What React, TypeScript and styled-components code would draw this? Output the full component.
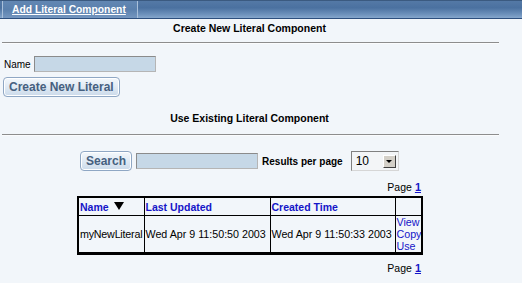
import React from "react";
import styled, { createGlobalStyle } from "styled-components";

const GlobalStyle = createGlobalStyle`
  html, body {
    margin: 0;
    padding: 0;
    background: #f2f6fa;
    font-family: "Liberation Sans", Arial, sans-serif;
  }
`;

const Page = styled.div`
  width: 522px;
  height: 283px;
  background: #f2f6fa;
  overflow: hidden;
`;

// 上部のタブバー
const TabBar = styled.div`
  height: 19px;
  display: flex;
  box-sizing: border-box;
  border-top: 1px solid #3b5a80;
  border-bottom: 1px solid #2d4f7e;
  background: linear-gradient(#5479a6, #4b71a0 40%, #6f93bd 80%, #86a7cc);
`;

const Tab = styled.a`
  width: 136px;
  margin-left: 2px;
  box-sizing: border-box;
  border-left: 1px solid #a9c0da;
  border-right: 1px solid #a9c0da;
  padding-left: 9px;
  display: flex;
  align-items: center;
  color: #fff;
  font-size: 10.3px;
  font-weight: bold;
  text-decoration: underline;
  background: linear-gradient(#6287b3, #5a80ad 50%, #7597c0);
`;

const Content = styled.div`
  width: 499px;
`;

const SectionTitle = styled.div<{ $top: number }>`
  margin-top: ${(p) => p.$top}px;
  text-align: center;
  font-size: 10.5px;
  font-weight: bold;
  color: #000;
  line-height: 13px;
`;

const Rule = styled.div<{ $top: number }>`
  margin: ${(p) => p.$top}px 0 0 2px;
  height: 1px;
  background: #8d8d8d;
  border-bottom: 1px solid #fbfcfd;
`;

const Row = styled.div<{ $top: number; $left: number }>`
  display: flex;
  align-items: center;
  margin-top: ${(p) => p.$top}px;
  margin-left: ${(p) => p.$left}px;
`;

const Label = styled.span<{ $bold?: boolean }>`
  font-size: 10px;
  font-weight: ${(p) => (p.$bold ? "bold" : "normal")};
  color: #000;
`;

const TextBox = styled.div<{ $width: number }>`
  width: ${(p) => p.$width}px;
  height: 16px;
  box-sizing: border-box;
  background: #c6d8e7;
  border: 1px solid #8b8b8b;
  border-right-color: #b5b5b5;
  border-bottom-color: #b5b5b5;
`;

const Button = styled.button<{ $pad: number }>`
  height: 20px;
  padding: 0 ${(p) => p.$pad}px;
  border: 1px solid #8fa7c4;
  border-radius: 4px;
  background: linear-gradient(#f4f8fc, #dce7f2 60%, #cbdaea);
  color: #46607f;
  font-family: "Liberation Sans", Arial, sans-serif;
  font-size: 12px;
  font-weight: bold;
  line-height: 18px;
  box-shadow: inset 0 0 0 1px #ffffff;
  cursor: pointer;
`;

const Select = styled.div`
  width: 48px;
  height: 20px;
  box-sizing: border-box;
  margin-left: 8px;
  display: flex;
  align-items: center;
  justify-content: space-between;
  background: #f3f5f7;
  border: 1px solid #808080;
  border-right-color: #d6d6d6;
  border-bottom-color: #d6d6d6;
  padding: 0 2px 0 4px;
  font-size: 12px;
`;

const DropButton = styled.span`
  width: 13px;
  height: 13px;
  box-sizing: border-box;
  background: #d4d0c8;
  border: 1px solid;
  border-color: #ffffff #404040 #404040 #ffffff;
  display: flex;
  align-items: center;
  justify-content: center;
  &::after {
    content: "";
    border-left: 3px solid transparent;
    border-right: 3px solid transparent;
    border-top: 3px solid #000;
  }
`;

const Pager = styled.div<{ $top: number }>`
  width: 421px;
  margin-top: ${(p) => p.$top}px;
  text-align: right;
  font-size: 10.5px;
  line-height: 12px;
  color: #000;
  a {
    color: #1515c8;
    font-weight: bold;
    font-size: 11px;
    text-decoration: underline;
    margin-left: 3px;
  }
`;

const Table = styled.table`
  margin: 3px 0 0 77px;
  width: 344px;
  table-layout: fixed;
  border-collapse: collapse;
  border: 2px solid #000;
  border-bottom-width: 3px;
  font-size: 10.7px;
  th, td {
    border: 1px solid #000;
    padding: 0 0 0 1px;
    white-space: nowrap;
    overflow: hidden;
  }
  th {
    height: 17px;
    text-align: left;
    color: #1515c8;
    font-weight: bold;
    font-size: 10.5px;
  }
  td {
    height: 36px;
    color: #000;
  }
`;

const NameCell = styled.td`
  letter-spacing: -0.2px;
`;

const SortArrow = styled.span`
  display: inline-block;
  margin-left: 5px;
  border-left: 5px solid transparent;
  border-right: 5px solid transparent;
  border-top: 8px solid #000;
  vertical-align: 1px;
`;

const ActionList = styled.div`
  display: flex;
  flex-direction: column;
  line-height: 12px;
  a {
    color: #1515c8;
    text-decoration: none;
  }
`;

const App: React.FC = () => {
  return (
    <Page>
      <GlobalStyle />
      <TabBar>
        <Tab href="#">Add Literal Component</Tab>
      </TabBar>
      <Content>
        <SectionTitle $top={3}>Create New Literal Component</SectionTitle>
        <Rule $top={7} />
        <Row $top={12} $left={4}>
          <Label>Name</Label>
          <TextBox $width={122} style={{ marginLeft: 3 }} />
        </Row>
        <Row $top={5} $left={3}>
          <Button $pad={5}>Create New Literal</Button>
        </Row>
        <SectionTitle $top={15}>Use Existing Literal Component</SectionTitle>
        <Rule $top={9} />
        <Row $top={15} $left={80}>
          <Button $pad={5}>Search</Button>
          <TextBox $width={122} style={{ marginLeft: 4 }} />
          <Label $bold style={{ marginLeft: 4 }}>
            Results per page
          </Label>
          <Select>
            10
            <DropButton />
          </Select>
        </Row>
      </Content>
      <Pager $top={10}>
        Page<a href="#">1</a>
      </Pager>
      <Table>
        <colgroup>
          <col style={{ width: 66 }} />
          <col style={{ width: 126 }} />
          <col style={{ width: 125 }} />
          <col style={{ width: 27 }} />
        </colgroup>
        <thead>
          <tr>
            <th>
              Name
              <SortArrow />
            </th>
            <th>Last Updated</th>
            <th>Created Time</th>
            <th></th>
          </tr>
        </thead>
        <tbody>
          <tr>
            <NameCell>myNewLiteral</NameCell>
            <td>Wed Apr 9 11:50:50 2003</td>
            <td>Wed Apr 9 11:50:33 2003</td>
            <td>
              <ActionList>
                <a href="#">View</a>
                <a href="#">Copy</a>
                <a href="#">Use</a>
              </ActionList>
            </td>
          </tr>
        </tbody>
      </Table>
      <Pager $top={7}>
        Page<a href="#">1</a>
      </Pager>
    </Page>
  );
};

export default App;
